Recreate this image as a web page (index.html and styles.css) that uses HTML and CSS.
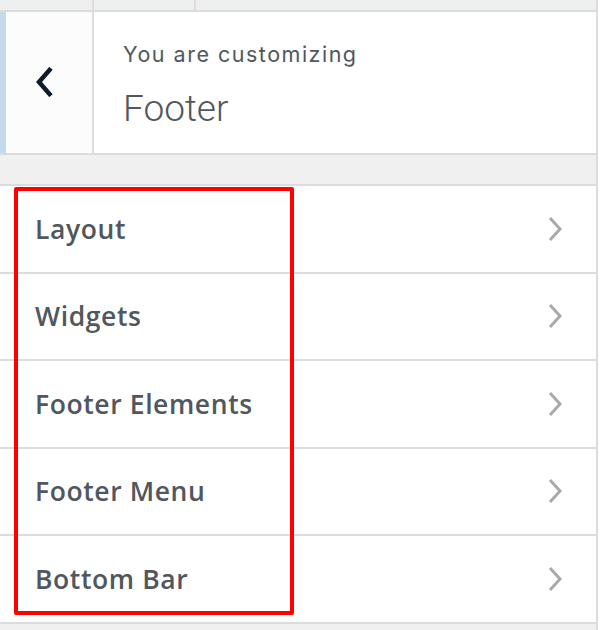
FILE: index.html
```html
<!DOCTYPE html>
<html>
<head>
  <title>Customizer - Footer</title>
  <link rel="stylesheet" href="styles.css">
</head>
<body>
  <div class="panel">
    <div class="top-strip">
      <span class="tab tab-first"></span>
      <span class="tab"></span>
    </div>

    <div class="header">
      <div class="accent"></div>
      <button class="back" aria-label="Back">
        <svg width="18" height="30" viewBox="0 0 18 30">
          <path d="M14.5 3 L4 15 L14.5 27" fill="none" stroke="#0f1b2a" stroke-width="4.5" stroke-linecap="square"/>
        </svg>
      </button>
      <div class="title">
        <div class="title-sub">You are customizing</div>
        <div class="title-main">Footer</div>
      </div>
    </div>

    <div class="spacer"></div>

    <div class="sections">
      <div class="highlight"></div>
      <div class="section-row"><span>Layout</span><svg class="chev" width="18" height="28" viewBox="0 0 18 28"><path d="M4 3 L14 14 L4 25" fill="none" stroke="#a7aaad" stroke-width="3"/></svg></div>
      <div class="section-row"><span>Widgets</span><svg class="chev" width="18" height="28" viewBox="0 0 18 28"><path d="M4 3 L14 14 L4 25" fill="none" stroke="#a7aaad" stroke-width="3"/></svg></div>
      <div class="section-row"><span>Footer Elements</span><svg class="chev" width="18" height="28" viewBox="0 0 18 28"><path d="M4 3 L14 14 L4 25" fill="none" stroke="#a7aaad" stroke-width="3"/></svg></div>
      <div class="section-row"><span>Footer Menu</span><svg class="chev" width="18" height="28" viewBox="0 0 18 28"><path d="M4 3 L14 14 L4 25" fill="none" stroke="#a7aaad" stroke-width="3"/></svg></div>
      <div class="section-row"><span>Bottom Bar</span><svg class="chev" width="18" height="28" viewBox="0 0 18 28"><path d="M4 3 L14 14 L4 25" fill="none" stroke="#a7aaad" stroke-width="3"/></svg></div>
    </div>

    <div class="bottom"></div>
  </div>
</body>
</html>
```

FILE: styles.css
```css
body {
  margin: 0;
  background: #fff;
  font-family: Inter, Roboto, sans-serif;
  color: #50575e;
}
.panel {
  width: 596px;
  height: 630px;
  border-right: 2px solid #dcdcde;
  background: #f0f0f1;
  display: flex;
  flex-direction: column;
  overflow: hidden;
}
.top-strip {
  height: 10px;
  flex-shrink: 0;
  background: #eeefef;
  border-bottom: 2px solid #dcdcde;
  display: flex;
}
.tab {
  width: 100px;
  border-right: 2px solid #dcdcde;
}
.tab-first {
  width: 92px;
}
.header {
  display: flex;
  height: 141px;
  flex-shrink: 0;
  background: #fff;
  border-bottom: 2px solid #dcdcde;
}
.accent {
  width: 6px;
  background: #c5d9ed;
}
.back {
  width: 88px;
  padding: 0 10px 2px 0;
  margin: 0;
  border: none;
  border-right: 2px solid #dcdcde;
  background: #fcfcfc;
  display: flex;
  align-items: center;
  justify-content: center;
}
.title {
  flex: 1;
  padding: 30px 0 0 29px;
}
.title-sub {
  font-size: 21.5px;
  line-height: 24px;
  letter-spacing: 1.5px;
  color: #50575e;
}
.title-main {
  font-family: Roboto, sans-serif;
  font-size: 37px;
  font-weight: 300;
  line-height: 44px;
  margin-top: 21px;
  color: #50575e;
}
.spacer {
  height: 29px;
  flex-shrink: 0;
  border-bottom: 2px solid #dcdcde;
}
.sections {
  position: relative;
  background: #fff;
  flex-shrink: 0;
}
.section-row {
  height: 85.5px;
  border-bottom: 2px solid #dcdcde;
  display: flex;
  align-items: center;
  justify-content: space-between;
  padding: 0 32px 0 35px;
  font-family: "Open Sans", sans-serif;
  font-weight: 600;
  font-size: 26.5px;
  letter-spacing: 0.6px;
  color: #50575e;
}
.chev {
  display: block;
}
.highlight {
  position: absolute;
  left: 14px;
  top: 1px;
  width: 272px;
  height: 420px;
  border: 4px solid #ff0000;
  border-radius: 2px;
}
.bottom {
  flex: 1;
}
```
